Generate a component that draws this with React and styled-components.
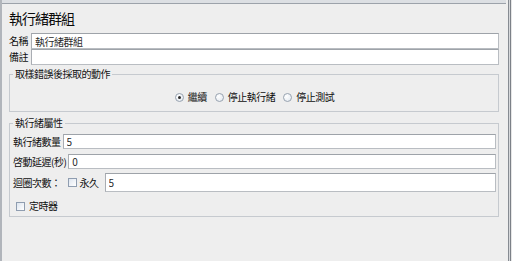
import styled, { createGlobalStyle } from "styled-components";

const GlobalStyle = createGlobalStyle`
  body {
    margin: 0;
    background: #eeeeee;
    font-family: "Noto Sans CJK TC", "Noto Sans", sans-serif;
  }
`;

const Frame = styled.div`
  display: flex;
  width: 512px;
  height: 261px;
  background: #eeeeee;
  border-left: 2px solid #b1b5bb;
  box-sizing: border-box;
  overflow: hidden;
`;

const Main = styled.div`
  flex: 1;
  display: flex;
  flex-direction: column;
  min-width: 0;
`;

const TopStrip = styled.div`
  height: 4px;
  background: #dcdfe3;
  border-bottom: 1px solid #9ca2aa;
  box-sizing: border-box;
`;

const RightEdge = styled.div`
  width: 6px;
  background: linear-gradient(
    to right,
    #eeeeee 0 2px,
    #868b92 2px 3px,
    #d6d8db 3px 4px,
    #7c8188 4px 5px,
    #e6e6e6 5px 6px
  );
`;

const Panel = styled.div`
  flex: 1;
  display: flex;
  flex-direction: column;
  padding: 0 7px;
`;

const Title = styled.div`
  height: 29px;
  line-height: 29px;
  font-size: 14px;
  letter-spacing: -1px;
  color: #0a0a0a;
`;

const FieldRow = styled.div`
  display: flex;
  height: 16px;
`;

const FieldLabel = styled.div`
  width: 22px;
  font-size: 10px;
  line-height: 16px;
  letter-spacing: -0.5px;
  color: #0e0e0e;
`;

const TextBox = styled.input`
  flex: 1;
  min-width: 0;
  height: 100%;
  box-sizing: border-box;
  margin: 0 0 0 ${(p) => p.$left || 0}px;
  padding: 0 3px;
  border: 1px solid #b9bdc2;
  border-top-color: #9ea3a9;
  border-left-color: #a9adb3;
  background: #ffffff;
  font-family: inherit;
  font-size: 10px;
  letter-spacing: -0.5px;
  color: #2a2a2a;
  outline: none;
`;

const Group = styled.fieldset`
  margin: ${(p) => p.$top}px 0 0;
  padding: ${(p) => p.$pad};
  border: 1px solid #c6cacf;
  min-width: 0;
`;

const Legend = styled.legend`
  padding: 0 2px;
  font-size: 10px;
  line-height: 12px;
  letter-spacing: -0.5px;
  color: #141414;
`;

const RadioRow = styled.div`
  display: flex;
  justify-content: center;
  align-items: center;
  gap: 8px;
  height: 14px;
`;

const Choice = styled.label`
  display: flex;
  align-items: center;
  gap: ${(p) => p.$gap || 4}px;
  font-size: 10px;
  line-height: 12px;
  letter-spacing: -0.5px;
  color: #0e0e0e;
`;

const RadioDot = styled.span`
  position: relative;
  width: 9px;
  height: 9px;
  box-sizing: border-box;
  border-radius: 50%;
  border: 1px solid #98a3b0;
  background: radial-gradient(circle at 35% 35%, #ffffff, #dfe6ee);

  &::after {
    content: "";
    display: ${(p) => (p.$checked ? "block" : "none")};
    position: absolute;
    left: 2px;
    top: 2px;
    width: 3px;
    height: 3px;
    border-radius: 50%;
    background: #2a2a2a;
  }
`;

const CheckBox = styled.span`
  width: 9px;
  height: 9px;
  box-sizing: border-box;
  margin-left: ${(p) => p.$left || 0}px;
  border: 1px solid #8f9db0;
  background: linear-gradient(135deg, #dde5ef, #ffffff);
`;

const PropRow = styled.div`
  display: flex;
  align-items: center;
  height: ${(p) => p.$h}px;
  margin-top: ${(p) => p.$mt || 0}px;
`;

const PropLabel = styled.div`
  margin-right: ${(p) => p.$gap}px;
  font-size: 10px;
  letter-spacing: -0.5px;
  color: #0e0e0e;
  white-space: nowrap;
`;

const PropInput = styled(TextBox)`
  align-self: stretch;
  height: auto;
`;

const App = () => {
  return (
    <>
      <GlobalStyle />
      <Frame>
        <Main>
          <TopStrip />
          <Panel>
            <Title>執行緒群組</Title>
            <FieldRow>
              <FieldLabel>名稱</FieldLabel>
              <TextBox defaultValue="執行緒群組" />
            </FieldRow>
            <FieldRow>
              <FieldLabel>備註</FieldLabel>
              <TextBox defaultValue="" />
            </FieldRow>

            <Group $top={3} $pad="10px 2px 7px 3px">
              <Legend>取樣錯誤後採取的動作</Legend>
              <RadioRow>
                <Choice>
                  <RadioDot $checked />
                  繼續
                </Choice>
                <Choice>
                  <RadioDot />
                  停止執行緒
                </Choice>
                <Choice>
                  <RadioDot />
                  停止測試
                </Choice>
              </RadioRow>
            </Group>

            <Group $top={5} $pad="5px 2px 4px 3px">
              <Legend>執行緒屬性</Legend>
              <PropRow $h={15}>
                <PropLabel $gap={2}>執行緒數量</PropLabel>
                <PropInput defaultValue="5" />
              </PropRow>
              <PropRow $h={15} $mt={5}>
                <PropLabel $gap={2}>啓動延遲(秒)</PropLabel>
                <PropInput defaultValue="0" />
              </PropRow>
              <PropRow $h={19} $mt={4}>
                <PropLabel $gap={0}>迴圈次數：</PropLabel>
                <Choice $gap={3}>
                  <CheckBox $left={7} />
                  永久
                </Choice>
                <PropInput $left={6} defaultValue="5" />
              </PropRow>
              <PropRow $h={12} $mt={8}>
                <Choice $gap={4}>
                  <CheckBox $left={3} />
                  定時器
                </Choice>
              </PropRow>
            </Group>
          </Panel>
        </Main>
        <RightEdge />
      </Frame>
    </>
  );
};

export default App;
